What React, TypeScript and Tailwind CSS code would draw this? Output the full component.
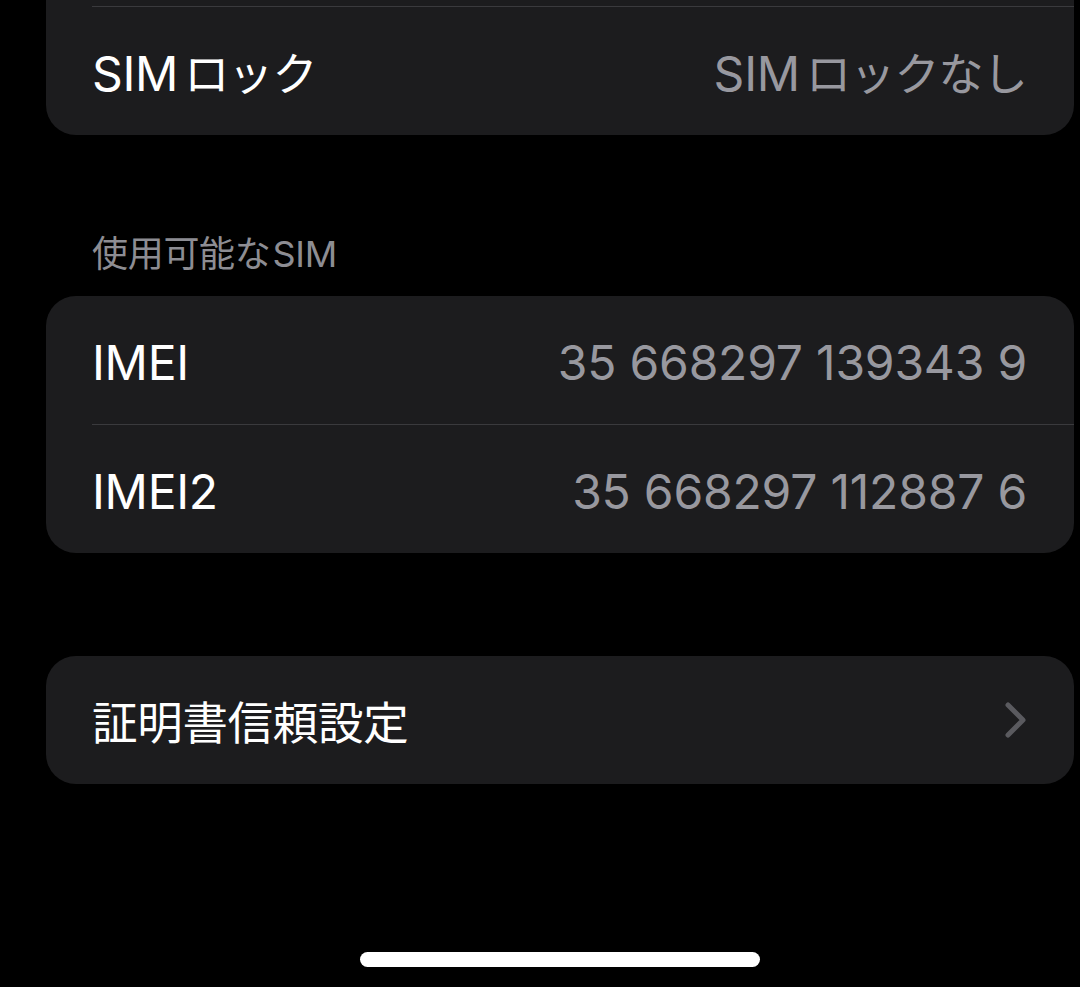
import React from 'react'

const font = { fontFamily: 'Inter, "Noto Sans CJK JP", sans-serif' }

function Jp({ children, gap }: { children: React.ReactNode; gap?: boolean }) {
  return <span className={gap ? 'ml-[6px] text-[45px] tracking-[-0.8px]' : 'text-[45.5px]'}>{children}</span>
}

function Row({ label, value, chevron }: { label: React.ReactNode; value?: React.ReactNode; chevron?: boolean }) {
  return (
    <div className="h-[128px] flex items-center justify-between pl-[46px] pr-[47px] pt-[6px]">
      <span className="text-white text-[48px] leading-none tracking-[-0.3px]">{label}</span>
      {value && <span className="text-[#98989f] text-[48px] leading-none tracking-[-0.2px]">{value}</span>}
      {chevron && (
        <svg width="24" height="38" viewBox="0 0 24 38" className="mr-[-1px] -mt-[6px]">
          <path d="M4 4 L19 19 L4 34" fill="none" stroke="#5a5a5f" strokeWidth="5" strokeLinecap="round" strokeLinejoin="round" />
        </svg>
      )}
    </div>
  )
}

function Divider() {
  return <div className="ml-[46px] h-px bg-[#3a3a3d]" />
}

export default function App() {
  return (
    <div className="w-[1080px] h-[987px] bg-black overflow-hidden flex flex-col" style={font}>
      <div className="ml-[46px] mr-[6px] -mt-[122px] bg-[#1c1c1e] rounded-[30px]">
        <div className="h-[128px]" />
        <Divider />
        <Row
          label={<>SIM<Jp gap>ロック</Jp></>}
          value={<>SIM<Jp gap>ロックなし</Jp></>}
        />
      </div>

      <div className="mt-[97px] h-[44px] pl-[92px] flex items-center text-[36px] leading-none text-[#8d8d93] tracking-[-0.3px]">
        使用可能な<span className="ml-[2px]">SIM</span>
      </div>

      <div className="mt-[20px] ml-[46px] mr-[6px] bg-[#1c1c1e] rounded-[30px]">
        <Row label="IMEI" value="35 668297 139343 9" />
        <Divider />
        <Row label="IMEI2" value="35 668297 112887 6" />
      </div>

      <div className="mt-[103px] ml-[46px] mr-[6px] bg-[#1c1c1e] rounded-[30px]">
        <Row label={<Jp>証明書信頼設定</Jp>} chevron />
      </div>

      <div className="mt-[168px] flex justify-center pl-[40px]">
        <div className="w-[400px] h-[15px] rounded-full bg-white" />
      </div>
    </div>
  )
}
